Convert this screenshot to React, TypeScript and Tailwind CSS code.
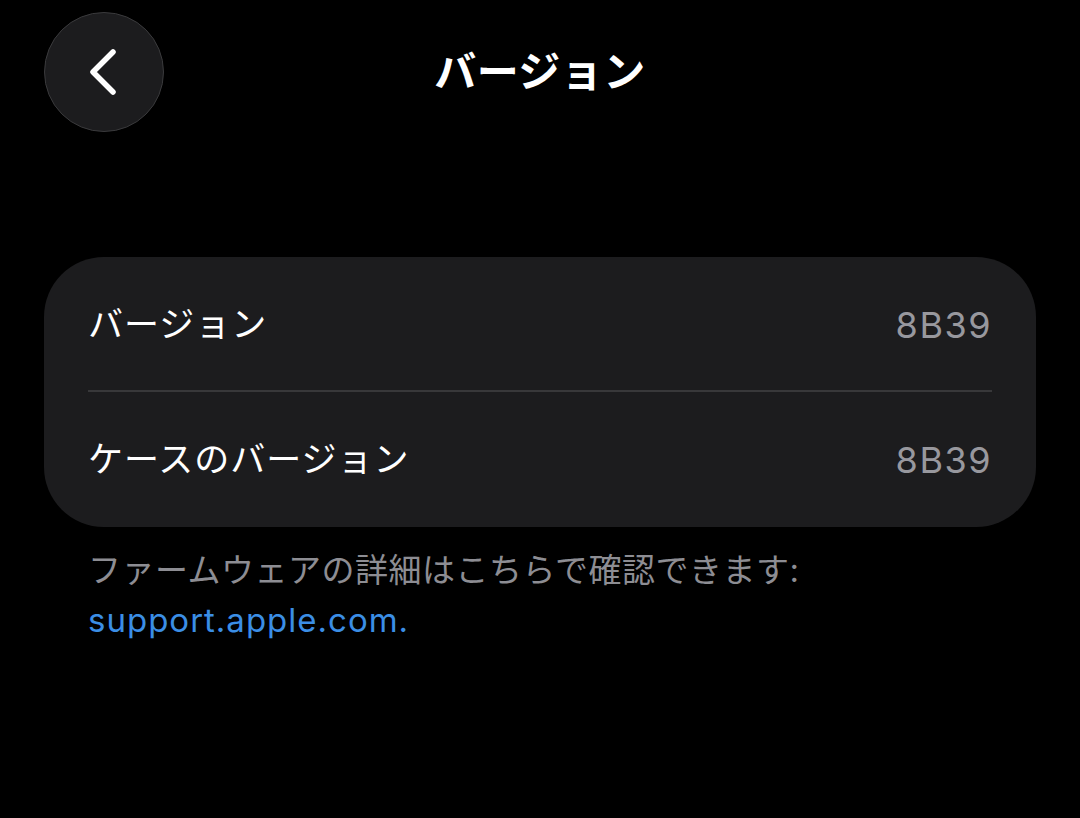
export default function App() {
  const jp = { fontFamily: '"Inter", "Noto Sans CJK JP", sans-serif' }
  return (
    <div className="w-[1080px] h-[818px] bg-black text-white overflow-hidden" style={jp}>
      {/* Header */}
      <div className="relative flex items-center justify-center h-[144px] px-[44px]">
        <button className="absolute left-[44px] top-[12px] w-[120px] h-[120px] rounded-full bg-[#1c1c1e] border-[1.5px] border-[#3a3a3c] flex items-center justify-center">
          <svg width="40" height="48" viewBox="0 0 40 48" fill="none">
            <path d="M29 4 L9 24 L29 44" stroke="white" strokeWidth="5.5" strokeLinecap="round" strokeLinejoin="round" />
          </svg>
        </button>
        <h1 className="text-[42px] font-bold tracking-[0.5px] leading-none -mt-[1px]">バージョン</h1>
      </div>

      {/* Card */}
      <div className="mt-[113px] mx-[44px] rounded-[60px] bg-[#1c1c1e] px-[44px]">
        <div className="flex items-center justify-between h-[133px] pt-[2px]">
          <span className="text-[35px] tracking-[1px]">バージョン</span>
          <span className="text-[36px] tracking-[1.5px] text-[#98989e]">8B39</span>
        </div>
        <div className="h-[2px] bg-[#38383a]" />
        <div className="flex items-center justify-between h-[135px]">
          <span className="text-[35px] tracking-[1px]">ケースのバージョン</span>
          <span className="text-[36px] tracking-[1.5px] text-[#98989e]">8B39</span>
        </div>
      </div>

      {/* Footer */}
      <div className="px-[88px] pt-[18px] text-[33px] leading-[50px]">
        <p className="text-[#8d8d93] tracking-[0.5px]">ファームウェアの詳細はこちらで確認できます:</p>
        <p className="text-[#3b8ee5] tracking-[1px]">support.apple.com.</p>
      </div>
    </div>
  )
}
